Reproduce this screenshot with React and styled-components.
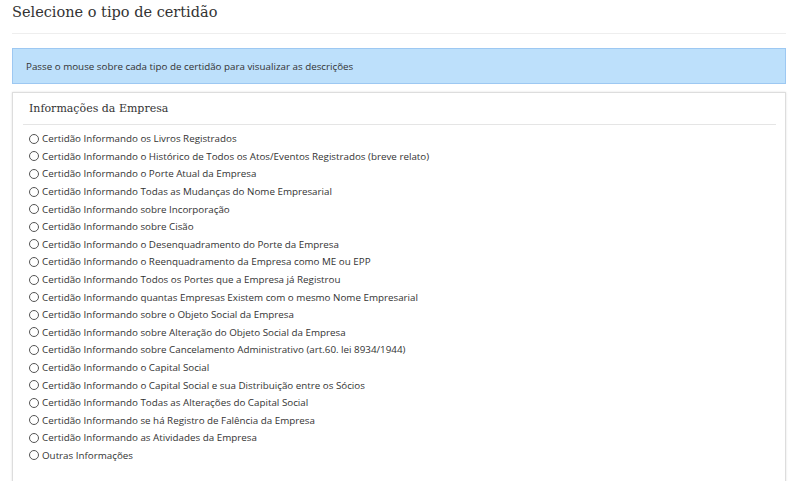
import React from "react";
import styled, { createGlobalStyle } from "styled-components";

const GlobalStyle = createGlobalStyle`
  body {
    margin: 0;
    background: #fff;
    font-family: "Open Sans", "Noto Sans", sans-serif;
    color: #333;
  }
`;

const Page = styled.div`
  padding: 0 14px 0 12px;
`;

const Title = styled.h3`
  font-family: "DejaVu Serif", serif;
  font-weight: 400;
  font-size: 14.5px;
  line-height: 20px;
  color: #333;
  margin: 0;
  padding: 2px 0 11px;
  border-bottom: 1px solid #eee;
`;

const Alert = styled.div`
  margin-top: 14px;
  height: 36px;
  box-sizing: border-box;
  display: flex;
  align-items: center;
  padding: 0 13px;
  background: #bde0fb;
  border: 1px solid #9dc8f2;
  font-size: 9.8px;
  color: #333;
`;

const Panel = styled.div`
  margin-top: 8px;
  border: 1px solid #ddd;
  box-shadow: 0 0 2px rgba(0, 0, 0, 0.12);
  padding: 0 9px 14px 10px;
  min-height: 400px;
`;

const PanelHeader = styled.div`
  font-family: "DejaVu Serif", serif;
  font-size: 11px;
  line-height: 14px;
  color: #333;
  padding: 9px 0 8px 6px;
  border-bottom: 1px solid #e5e5e5;
`;

const List = styled.div`
  display: flex;
  flex-direction: column;
  padding: 5px 0 0 6px;
`;

const Option = styled.label`
  display: flex;
  align-items: center;
  height: 17.6px;
  font-size: 9.8px;
  color: #333;
  cursor: pointer;
`;

const Radio = styled.span`
  width: 8px;
  height: 8px;
  border: 1px solid #555;
  border-radius: 50%;
  margin-right: 3px;
  flex-shrink: 0;
`;

const options = [
  "Certidão Informando os Livros Registrados",
  "Certidão Informando o Histórico de Todos os Atos/Eventos Registrados (breve relato)",
  "Certidão Informando o Porte Atual da Empresa",
  "Certidão Informando Todas as Mudanças do Nome Empresarial",
  "Certidão Informando sobre Incorporação",
  "Certidão Informando sobre Cisão",
  "Certidão Informando o Desenquadramento do Porte da Empresa",
  "Certidão Informando o Reenquadramento da Empresa como ME ou EPP",
  "Certidão Informando Todos os Portes que a Empresa já Registrou",
  "Certidão Informando quantas Empresas Existem com o mesmo Nome Empresarial",
  "Certidão Informando sobre o Objeto Social da Empresa",
  "Certidão Informando sobre Alteração do Objeto Social da Empresa",
  "Certidão Informando sobre Cancelamento Administrativo (art.60. lei 8934/1944)",
  "Certidão Informando o Capital Social",
  "Certidão Informando o Capital Social e sua Distribuição entre os Sócios",
  "Certidão Informando Todas as Alterações do Capital Social",
  "Certidão Informando se há Registro de Falência da Empresa",
  "Certidão Informando as Atividades da Empresa",
  "Outras Informações",
];

export default function App() {
  return (
    <>
      <GlobalStyle />
      <Page>
        <Title>Selecione o tipo de certidão</Title>
        <Alert>Passe o mouse sobre cada tipo de certidão para visualizar as descrições</Alert>
        <Panel>
          <PanelHeader>Informações da Empresa</PanelHeader>
          <List>
            {options.map((text) => (
              <Option key={text}>
                <Radio />
                {text}
              </Option>
            ))}
          </List>
        </Panel>
      </Page>
    </>
  );
}
